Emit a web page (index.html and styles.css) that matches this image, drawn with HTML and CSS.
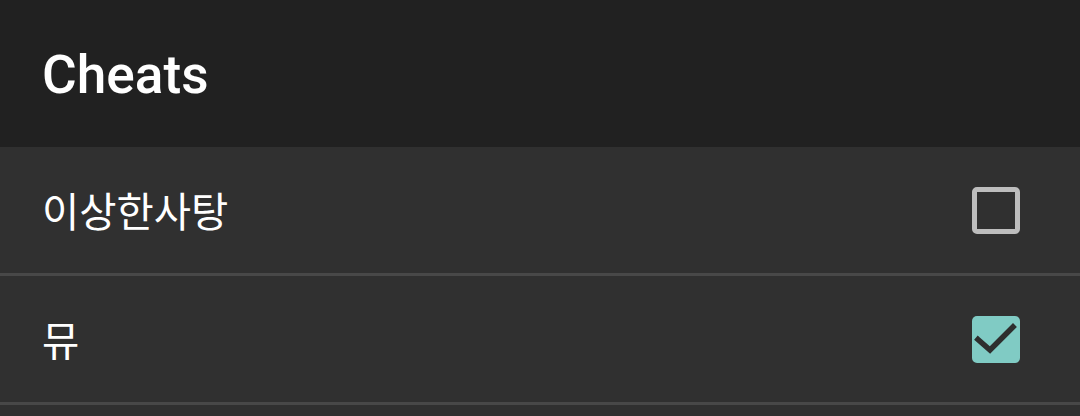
FILE: index.html
```html
<!DOCTYPE html>
<html lang="ko">
<head>
<meta charset="utf-8">
<title>Cheats</title>
<link rel="stylesheet" href="styles.css">
</head>
<body>
<div class="screen">
  <header class="appbar">
    <h1 class="title">Cheats</h1>
  </header>
  <ul class="list">
    <li class="item">
      <span class="label">이상한사탕</span>
      <span class="checkbox"></span>
    </li>
    <li class="item">
      <span class="label">뮤</span>
      <span class="checkbox checked">
        <svg viewBox="0 0 48 48" width="48" height="48" aria-hidden="true"><path d="M6 24.5 L18 35 L41 12" fill="none" stroke="#2e2e2e" stroke-width="5.5" stroke-linecap="square" stroke-linejoin="miter"/></svg>
      </span>
    </li>
  </ul>
</div>
</body>
</html>
```

FILE: styles.css
```css
html, body {
  margin: 0;
  padding: 0;
  background: #303030;
}
body {
  width: 1080px;
  height: 416px;
  overflow: hidden;
  font-family: Roboto, "Noto Sans CJK KR", sans-serif;
  color: #ffffff;
}
.screen {
  display: flex;
  flex-direction: column;
}
.appbar {
  height: 147px;
  background: #212121;
  display: flex;
  align-items: center;
  padding: 0 42px;
  box-sizing: border-box;
}
.title {
  margin: 0;
  font-family: Roboto, sans-serif;
  font-weight: 500;
  font-size: 53.2px;
  line-height: 1;
  color: #ffffff;
  padding-top: 4px;
}
.list {
  list-style: none;
  margin: 0;
  padding: 0;
}
.item {
  height: 126px;
  border-bottom: 3px solid #484848;
  display: flex;
  align-items: center;
  justify-content: space-between;
  padding: 0 60px 0 42px;
  background: #303030;
}
.label {
  font-family: "Noto Sans CJK KR", sans-serif;
  font-size: 40.5px;
  color: #ffffff;
  line-height: 1;
}
.checkbox {
  width: 48px;
  height: 47px;
  box-sizing: border-box;
  border: 5px solid #bdbdbd;
  border-radius: 5px;
  display: flex;
  align-items: center;
  justify-content: center;
}
.checkbox.checked {
  background: #80cbc4;
  border: none;
}
.checkbox svg {
  display: block;
}
```
